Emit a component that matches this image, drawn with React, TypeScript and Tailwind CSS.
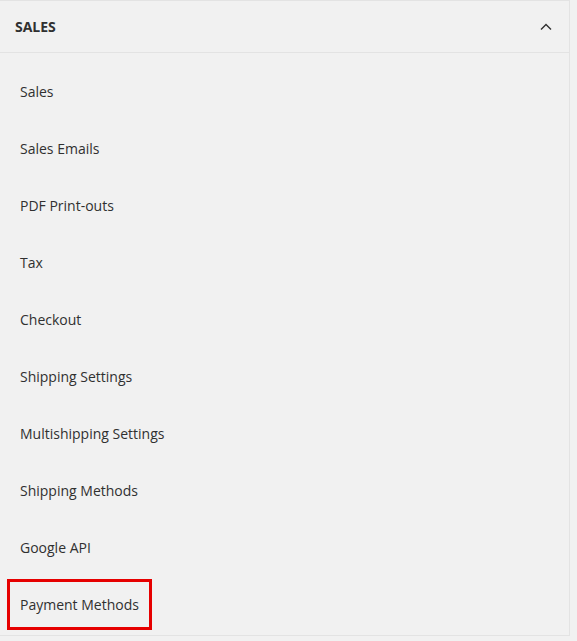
const items = [
  "Sales",
  "Sales Emails",
  "PDF Print-outs",
  "Tax",
  "Checkout",
  "Shipping Settings",
  "Multishipping Settings",
  "Shipping Methods",
  "Google API",
  "Payment Methods",
];

export default function App() {
  return (
    <div className="min-h-[641px] w-[577px] bg-[#f1f1f1] font-['Open_Sans',sans-serif] text-[#303030]">
      <div className="w-[570px] border-r border-t border-[#e3e3e3]">
        <div className="flex h-[52px] items-center justify-between border-b border-[#e3e3e3] pl-[15px] pr-[17px]">
          <span className="text-[14px] font-bold text-[#303030]">SALES</span>
          <svg width="12" height="8" viewBox="0 0 12 8" fill="none">
            <path d="M1 6.5 6 1.5l5 5" stroke="#303030" strokeWidth="1.4" />
          </svg>
        </div>
        <ul className="border-b border-[#e3e3e3] pb-[2px] pt-[10px]">
          {items.map((item, i) => (
            <li key={item} className="flex h-[57px] items-center pl-[7px]">
              <span
                className={
                  i === items.length - 1
                    ? "inline-flex h-[51px] items-center border-[3px] border-[#e60000] px-[10px] text-[14px]"
                    : "inline-flex h-[51px] items-center border-[3px] border-transparent px-[10px] text-[14px]"
                }
              >
                {item}
              </span>
            </li>
          ))}
        </ul>
      </div>
    </div>
  );
}
